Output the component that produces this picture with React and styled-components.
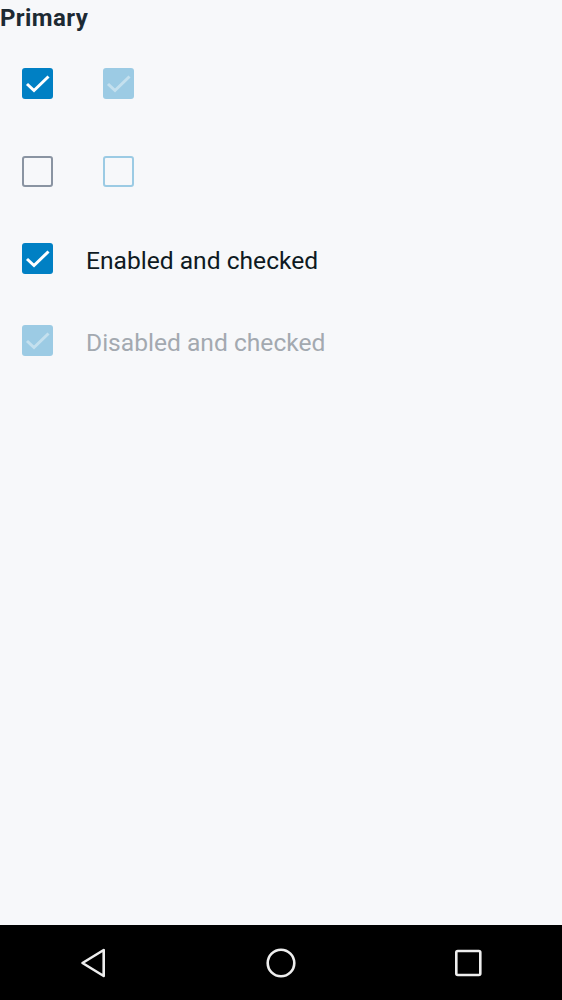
import React from "react";
import styled, { createGlobalStyle } from "styled-components";

const GlobalStyle = createGlobalStyle`
  html, body {
    margin: 0;
    padding: 0;
    background: #f7f8fa;
    font-family: Roboto, "Liberation Sans", sans-serif;
  }
`;

const Screen = styled.div`
  display: flex;
  flex-direction: column;
  width: 562px;
  height: 1000px;
  background: #f7f8fa;
`;

const Content = styled.div`
  flex: 1;
  display: flex;
  flex-direction: column;
`;

const Title = styled.h2`
  margin: 0;
  padding: 3px 0 0 0;
  font-size: 24px;
  line-height: 30px;
  letter-spacing: 0.4px;
  font-weight: 700;
  color: #1d2a33;
`;

const Row = styled.div`
  display: flex;
  align-items: center;
  gap: ${(p) => p.$gap || 50}px;
  padding-left: 22px;
  margin-top: ${(p) => p.$top}px;
`;

const Box = styled.span`
  box-sizing: border-box;
  width: 31px;
  height: 31px;
  flex: none;
  border-radius: 3px;
  display: flex;
  align-items: center;
  justify-content: center;
  background: ${(p) =>
    p.$checked ? (p.$disabled ? "#9ccbe4" : "#0080c4") : "transparent"};
  border: ${(p) =>
    p.$checked
      ? "none"
      : `2.5px solid ${p.$disabled ? "#9ccbe4" : "#8a94a2"}`};
`;

const Label = styled.span`
  font-size: 24.6px;
  line-height: 26px;
  padding-top: 4px;
  color: ${(p) => (p.$disabled ? "#a3a9b0" : "#0e1a22")};
  margin-left: 2px;
`;

const NavBar = styled.div`
  height: 75px;
  flex: none;
  background: #000;
  display: flex;
  align-items: center;
  justify-content: space-between;
  padding: 0 74px 0 73px;
`;

const NavIcon = styled.svg`
  width: 40px;
  height: 40px;
  flex: none;
  fill: none;
  stroke: #eeeeee;
  stroke-width: 2.6;
  stroke-linejoin: round;
`;

const Check = ({ faded }) => (
  <svg width="31" height="31" viewBox="0 0 31 31">
    <path
      d="M5 16 L12 22.5 L26.5 8.5"
      fill="none"
      stroke={faded ? "#c4e0ee" : "#fff"}
      strokeWidth="3"
    />
  </svg>
);

const Checkbox = ({ checked, disabled }) => (
  <Box $checked={checked} $disabled={disabled}>
    {checked && <Check faded={disabled} />}
  </Box>
);

export default function App() {
  return (
    <Screen>
      <GlobalStyle />
      <Content>
        <Title>Primary</Title>
        <Row $top={35}>
          <Checkbox checked />
          <Checkbox checked disabled />
        </Row>
        <Row $top={57}>
          <Checkbox />
          <Checkbox disabled />
        </Row>
        <Row $top={56} $gap={31}>
          <Checkbox checked />
          <Label>Enabled and checked</Label>
        </Row>
        <Row $top={51} $gap={31}>
          <Checkbox checked disabled />
          <Label $disabled>Disabled and checked</Label>
        </Row>
      </Content>
      <NavBar>
        <NavIcon viewBox="0 0 40 40">
          <path d="M30.7 7 L30.7 33 L9.5 20 Z" />
        </NavIcon>
        <NavIcon viewBox="0 0 40 40">
          <circle cx="20" cy="20" r="13.3" />
        </NavIcon>
        <NavIcon viewBox="0 0 40 40">
          <rect x="8.3" y="8" width="24" height="24" rx="1.5" />
        </NavIcon>
      </NavBar>
    </Screen>
  );
}
